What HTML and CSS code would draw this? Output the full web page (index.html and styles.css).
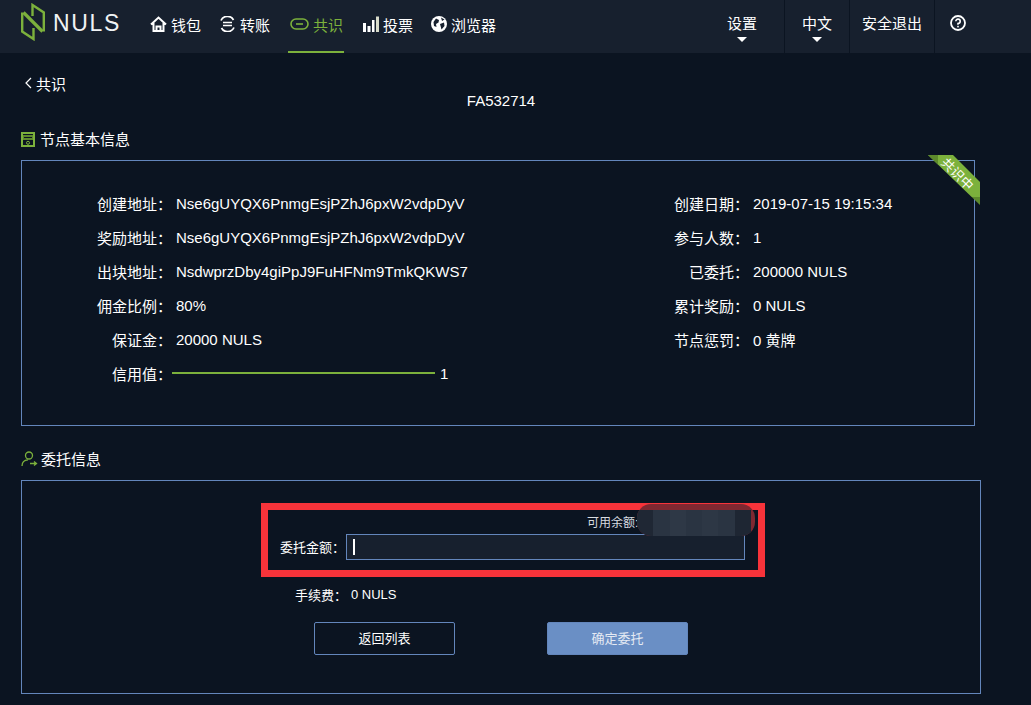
FILE: index.html
```html
<!DOCTYPE html>
<html lang="zh-CN">
<head>
    <meta charset="UTF-8">
    <title>NULS</title>
    <link rel="stylesheet" href="styles.css">
</head>
<body>
    <header class="topbar">
        <div class="logo">
            <svg class="logo-mark" width="24" height="38" viewBox="0 0 24 38">
                <g fill="none" stroke="#7cb13c" stroke-width="2.400">
                    <path d="M1.200 9.500 V28.500 L12.500 36 V25"/>
                    <path d="M22.800 28.500 V9.500 L11.500 2 V13"/>
                    <path d="M2.500 9.500 L21.500 28.500" stroke-width="3.200"/>
                </g>
            </svg>
            <span class="logo-text">NULS</span>
        </div>
        <nav class="nav">
            <a class="nav-item">
                <svg width="17" height="16" viewBox="0 0 17 16"><path d="M1 8.500 L8.500 1.500 L16 8.500 M3.500 7 V15 H13.500 V7 M6.500 15 V10.500 H10.500 V15" fill="none" stroke="#fff" stroke-width="2"/></svg>
                钱包
            </a>
            <a class="nav-item">
                <svg width="17" height="16" viewBox="0 0 17 16"><path d="M14.500 4 A7 7 0 0 0 2 4.500 M2.500 12 A7 7 0 0 0 15 11.500" fill="none" stroke="#fff" stroke-width="1.800"/><path d="M4 6.500 H13 M4 9.500 H13" stroke="#fff" stroke-width="1.600"/></svg>
                转账
            </a>
            <a class="nav-item nav-active">
                <svg width="19" height="12" viewBox="0 0 19 12"><rect x="1" y="1" width="17" height="10" rx="5" fill="none" stroke="#7cb13c" stroke-width="1.600"/><path d="M6 6 H13" stroke="#7cb13c" stroke-width="1.600"/></svg>
                共识
            </a>
            <a class="nav-item">
                <svg width="17" height="16" viewBox="0 0 17 16"><path d="M1 7 H4 V16 H1 Z M5.500 10 H8.500 V16 H5.500 Z M10 4 H12.500 V16 H10 Z" fill="#fff"/><path d="M14 0.500 H17 V16 H14 Z" fill="#d9dccb"/></svg>
                投票
            </a>
            <a class="nav-item">
                <svg width="16" height="16" viewBox="0 0 16 16"><circle cx="8" cy="8" r="8" fill="#fff"/><path d="M5 2.500 L8 4 L7.500 6.500 L5 8 L5.500 11 L3 10 L2.500 6 Z M9 8 L13 6.500 L13.500 10 L10.500 13.500 Z M10 1.500 L13.500 3.500 L11 5 Z" fill="#17202e"/></svg>
                浏览器
            </a>
        </nav>
        <div class="top-right">
            <a class="top-link top-set">设置<i class="caret-down"></i></a>
            <a class="top-link top-lang">中文<i class="caret-down"></i></a>
            <a class="top-link top-exit">安全退出</a>
            <a class="top-link top-help">
                <svg width="16" height="16" viewBox="0 0 16 16"><circle cx="8" cy="8" r="7" fill="none" stroke="#fff" stroke-width="1.800"/><path d="M5.800 6.300 A2.200 2.200 0 1 1 8 8.500 V9.800" fill="none" stroke="#fff" stroke-width="1.600"/><rect x="7.200" y="10.800" width="1.600" height="1.600" fill="#fff"/></svg>
            </a>
        </div>
    </header>

    <main class="page">
        <div class="back">
            <svg width="8" height="12" viewBox="0 0 8 12"><path d="M7 1 L2 6 L7 11" fill="none" stroke="#fff" stroke-width="1.200"/></svg>
            共识
        </div>
        <div class="page-title">FA532714</div>

        <h3 class="section-title">
            <svg width="14" height="15" viewBox="0 0 14 15"><rect x="1" y="1" width="12" height="13" fill="#0b1421" stroke="#7cb13c" stroke-width="2"/><path d="M2 3 H12 V8 H2 Z" fill="#5d8a2c"/><path d="M3 5.500 H11" stroke="#0b1421"/><circle cx="7" cy="10.800" r="1.500" fill="none" stroke="#7cb13c"/></svg>
            节点基本信息
        </h3>
        <section class="info-box">
            <div class="ribbon"><span>共识中</span></div>
            <div class="info-col info-left">
                <div class="info-row"><label>创建地址：</label><span>Nse6gUYQX6PnmgEsjPZhJ6pxW2vdpDyV</span></div>
                <div class="info-row"><label>奖励地址：</label><span>Nse6gUYQX6PnmgEsjPZhJ6pxW2vdpDyV</span></div>
                <div class="info-row"><label>出块地址：</label><span>NsdwprzDby4giPpJ9FuHFNm9TmkQKWS7</span></div>
                <div class="info-row"><label>佣金比例：</label><span>80%</span></div>
                <div class="info-row"><label>保证金：</label><span>20000 NULS</span></div>
                <div class="info-row credit">
                    <label>信用值：</label>
                    <div class="credit-bar"></div>
                    <span>1</span>
                </div>
            </div>
            <div class="info-col">
                <div class="info-row"><label>创建日期：</label><span>2019-07-15 19:15:34</span></div>
                <div class="info-row"><label>参与人数：</label><span>1</span></div>
                <div class="info-row"><label>已委托：</label><span>200000 NULS</span></div>
                <div class="info-row"><label>累计奖励：</label><span>0 NULS</span></div>
                <div class="info-row"><label>节点惩罚：</label><span>0 黄牌</span></div>
            </div>
        </section>

        <h3 class="section-title section-second">
            <svg width="17" height="16" viewBox="0 0 17 16"><circle cx="8" cy="4.500" r="3.500" fill="none" stroke="#7cb13c" stroke-width="1.300"/><path d="M1 15 C1 11 3.500 9 7 8.800" fill="none" stroke="#7cb13c" stroke-width="1.300"/><path d="M9 12.500 H15 M13 10.500 L15.500 12.500 L13 14.500" fill="none" stroke="#7cb13c" stroke-width="1.300"/></svg>
            委托信息
        </h3>
        <section class="form-box">
            <div class="amount-wrap">
                <div class="balance">可用余额:</div>
                <div class="blur-patch">
                    <i></i><i></i><i></i><i></i><i></i><i></i><i></i>
                </div>
                <div class="amount-row">
                    <label>委托金额：</label>
                    <div class="amount-input"><i class="cursor"></i></div>
                </div>
            </div>
            <div class="fee"><label>手续费：</label><span>0 NULS</span></div>
            <div class="btns">
                <button class="btn">返回列表</button>
                <button class="btn btn-primary">确定委托</button>
            </div>
        </section>
    </main>
</body>
</html>
```

FILE: styles.css
```css
*{
    padding:0;
    margin:0;
    box-sizing:border-box;
}
body{
    background-color:#0b1421;
    color:#fff;
    font-family:"Liberation Sans","Noto Sans CJK SC",sans-serif;
    font-size:15px;
    height:705px;
    overflow:hidden;
}
.topbar{
    display:flex;
    height:53px;
    padding-right:50px;
    background-color:#17202e;
}
.logo{
    display:flex;
    align-items:center;
    width:150px;
    padding-left:21px;
}
.logo-mark{
    margin-top:-9px;
}
.logo-text{
    margin-left:8px;
    margin-top:-6px;
    font-size:23px;
    letter-spacing:1.700px;
    color:#f0f2f4;
}
.nav{
    display:flex;
    flex:1;
}
.nav-item{
    display:flex;
    align-items:center;
    gap:4px;
    height:53px;
    margin-right:18px;
    padding-bottom:3px;
    border-bottom:2px solid transparent;
}
.nav-active{
    color:#7cb13c;
    border-bottom-color:#7cb13c;
    padding-left:2px;
    padding-right:1px;
}
.top-right{
    display:flex;
}
.top-link{
    position:relative;
    display:flex;
    justify-content:center;
    align-items:center;
    height:53px;
    padding-bottom:8px;
    border-right:1px solid #0b1421;
}
.top-set{
    flex:0 0 85px;
}
.top-lang{
    flex:0 0 65px;
}
.top-exit{
    flex:0 0 85px;
}
.top-help{
    flex:0 0 46px;
    border-right:none;
}
.caret-down{
    position:absolute;
    left:50%;
    top:37px;
    margin-left:-5px;
    border-left:5px solid transparent;
    border-right:5px solid transparent;
    border-top:5px solid #fff;
}
.page{
    padding:21px 0 0 21px;
}
.back{
    display:flex;
    align-items:center;
    gap:4px;
    height:18px;
    padding-left:3px;
}
.page-title{
    width:960px;
    height:18px;
    line-height:18px;
    text-align:center;
    font-size:15px;
}
.section-title{
    display:flex;
    align-items:center;
    gap:5px;
    height:20px;
    margin-top:18px;
    margin-bottom:12px;
    font-size:15px;
    font-weight:normal;
}
.section-title svg{
    margin-top:2px;
}
.section-second{
    margin-top:22px;
    gap:3px;
}
.info-box{
    position:relative;
    display:flex;
    width:954px;
    height:266px;
    padding:25px 0 0 75px;
    border:1px solid #6386bc;
}
.info-col{
    display:flex;
    flex-direction:column;
}
.info-left{
    width:577px;
}
.info-row{
    display:flex;
    align-items:center;
    height:34px;
}
.info-row label{
    width:79px;
}
.credit-bar{
    width:263px;
    height:2px;
    margin:0 5px 0 -4px;
    background-color:#7cb13c;
}
.info-left .info-row:nth-child(5) label,
.info-left .credit label{
    padding-left:15px;
}
.info-col:last-child .info-row:nth-child(3) label{
    padding-left:15px;
}
.ribbon{
    position:absolute;
    top:-6px;
    right:-6px;
    width:52px;
    height:50px;
    background:linear-gradient(to right,#5d8a2c 10px,transparent 10px),
               linear-gradient(to top,#5d8a2c 8px,#7cb13c 8px);
    clip-path:polygon(0 0,25px 0,100% 27px,100% 100%);
}
.ribbon span{
    position:absolute;
    top:9px;
    left:8px;
    width:44px;
    font-size:13px;
    text-align:center;
    transform:rotate(45deg);
}
.form-box{
    width:960px;
    height:214px;
    padding:22px 0 0 239px;
    border:1px solid #6386bc;
    font-size:13px;
}
.amount-wrap{
    position:relative;
    width:504px;
    height:74px;
    border:7px solid #f7333a;
}
.balance{
    height:24px;
    line-height:26px;
    padding-left:319px;
    font-size:12px;
    color:#d7dbe0;
}
.blur-patch{
    position:absolute;
    top:-6px;
    right:3px;
    display:flex;
    width:118px;
    height:32px;
    padding-right:4px;
    border-radius:14px;
    overflow:hidden;
    background-color:#7f2831;
}
.blur-patch i{
    flex:1;
    margin-top:6px;
    background-color:#2a3442;
}
.blur-patch i:first-child{
    background-color:#1f2734;
}
.blur-patch i:nth-child(3){
    background-color:#2e3846;
}
.blur-patch i:nth-child(5){
    background-color:#2d3745;
}
.blur-patch i:last-child{
    background-color:#1e2633;
}
.amount-row{
    display:flex;
    align-items:center;
}
.amount-row label{
    width:78px;
    margin-bottom:2px;
    padding-left:12px;
}
.amount-input{
    display:flex;
    align-items:center;
    width:399px;
    height:26px;
    padding-left:6px;
    border:1px solid #6386bc;
    background-color:#17202e;
}
.cursor{
    width:2px;
    height:16px;
    background-color:#fff;
}
.fee{
    display:flex;
    align-items:center;
    height:20px;
    margin-top:7px;
    padding-left:34px;
}
.fee label{
    width:56px;
}
.btns{
    display:flex;
    gap:92px;
    margin-top:18px;
    margin-left:53px;
}
.btn{
    width:141px;
    height:33px;
    padding-bottom:2px;
    border:1px solid #6386bc;
    border-radius:2px;
    background:none;
    color:#fff;
    font-family:inherit;
    font-size:13px;
}
.btn-primary{
    background-color:#6a8fc5;
    color:#e4eaf3;
}
```
